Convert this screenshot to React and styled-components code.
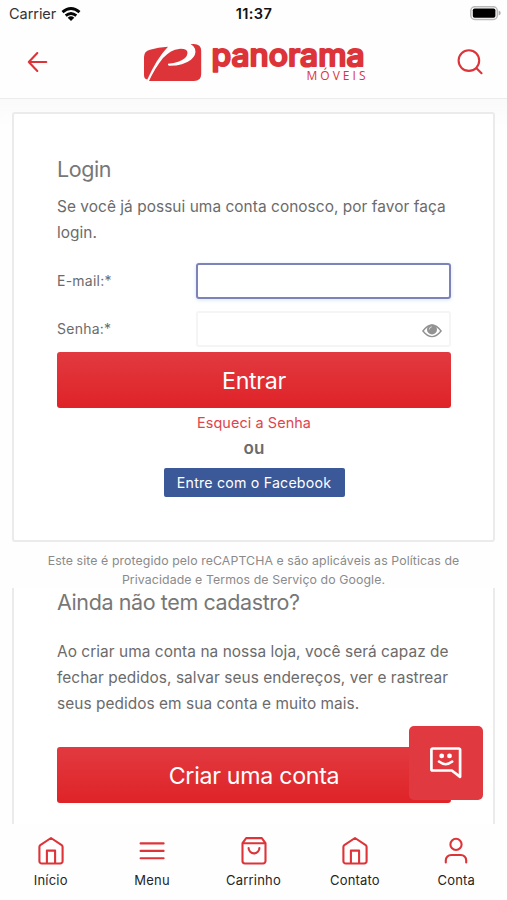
import React from "react";
import styled, { createGlobalStyle } from "styled-components";

const RED = "#dc3439";

const tabs = [
  { label: "Início", icon: "home" },
  { label: "Menu", icon: "menu" },
  { label: "Carrinho", icon: "bag" },
  { label: "Contato", icon: "home" },
  { label: "Conta", icon: "user" },
];

const TabIcon = ({ name }) => (
  <Stroke width="28" height="30" viewBox="0 0 28 30">
    {name === "home" && (
      <path d="M2.4 11a2.2 2.2 0 0 1 .9-1.8L14 2l10.7 7.2a2.2 2.2 0 0 1 .9 1.8v14.2a2.3 2.3 0 0 1-2.3 2.3H4.7a2.3 2.3 0 0 1-2.3-2.3zM9.9 27.5V14.6h8.2v12.9" />
    )}
    {name === "menu" && <path d="M2.6 7.4h23M2.6 14.9h23M2.6 22.3h23" />}
    {name === "bag" && (
      <path d="M2.5 7.2 6.2 2.1h15.6l3.7 5.1v17.9a2.4 2.4 0 0 1-2.4 2.4H4.9a2.4 2.4 0 0 1-2.4-2.4zM2.5 7.2h23M8.6 12a5.4 5.4 0 0 0 10.8 0" />
    )}
    {name === "user" && (
      <>
        <circle cx="14" cy="8.4" r="5.6" />
        <path d="M3.8 26.5v-2.1a5.4 5.4 0 0 1 5.4-5.4h9.6a5.4 5.4 0 0 1 5.4 5.4v2.1" />
      </>
    )}
  </Stroke>
);

const Logo = () => (
  <LogoSvg width="224" height="62" viewBox="0 -12 224 62">
    <path
      fill={RED}
      d="M1 14Q1 8 7 6.7Q15 4.5 25 3.8Q14 15 4.3 36.6Q1 36 1 32z"
    />
    <path
      fill={RED}
      d="M6 38Q12 25 20 15Q28 6.5 36 5.9Q44.5 5.4 44.5 10Q44 15.5 36 18.5Q31 20.3 25 20.8Q24.5 22.3 26 22.8Q40 23 48 16.8Q53.8 11.8 52 5.8Q50.7 2.5 47.5 1.3Q58.2-.3 58.2 8V31Q58.2 38 51 38z"
    />
    <Wordmark
      x="68.5"
      y="22.5"
      textLength="153"
      lengthAdjust="spacingAndGlyphs"
    >
      panorama
    </Wordmark>
    <Tagline x="163.5" y="36.6" textLength="59">
      MÓVEIS
    </Tagline>
  </LogoSvg>
);

const App = () => {
  return (
    <Screen>
      <GlobalStyle />
      <StatusBar>
        <Carrier>
          Carrier
          <svg width="20" height="16" viewBox="0 0 20 16">
            <g fill="none" stroke="#050505" strokeWidth="2.9">
              <path d="M1.5 6.2Q10-1.1 18.5 6.2" />
              <path d="M4.7 9.6Q10 5.3 15.3 9.6" />
            </g>
            <path d="M6.7 11.7Q10 9 13.3 11.7L10 15z" fill="#050505" />
          </svg>
        </Carrier>
        <Clock>11:37</Clock>
        <Battery>
          <svg width="31" height="16" viewBox="0 0 31 16">
            <rect x=".8" y=".8" width="26.5" height="12.6" rx="4" fill="#fff" stroke="#b9b9b9" strokeWidth="1.5" />
            <rect x="2.8" y="2.5" width="22.6" height="9.2" rx="1.8" fill="#000" />
            <path d="M28.7 4.6q2 .8 2 2.5t-2 2.5z" fill="#aaa" />
          </svg>
        </Battery>
      </StatusBar>

      <Header>
        <Stroke width="22" height="22" viewBox="0 0 22 22">
          <path d="M20.3 11H2.8M11.3 2 2.8 11l8.5 9" />
        </Stroke>
        <Logo />
        <Stroke width="28" height="28" viewBox="0 0 28 28">
          <circle cx="12.9" cy="12.6" r="10.3" />
          <path d="m20.5 20.2 5 5" />
        </Stroke>
      </Header>

      <Content>
        <LoginCard>
          <Title>Login</Title>
          <Text>
            Se você já possui uma conta conosco, por favor faça
            <br />
            login.
          </Text>
          <Field>
            <Label>E-mail:*</Label>
            <InputBox $focused />
          </Field>
          <Field>
            <Label>Senha:*</Label>
            <InputBox>
              <svg width="20" height="14" viewBox="0 0 20 14">
                <path d="M.9 7Q10-4.9 19.1 7Q10 18.2.9 7z" fill="#fff" stroke="#929292" strokeWidth="1.4" />
                <circle cx="10" cy="5.5" r="5" fill="#929292" />
                <path d="M7.3 5.5Q7.3 3 9.8 2.8" fill="none" stroke="#ddd" strokeWidth="1" />
              </svg>
            </InputBox>
          </Field>
          <RedButton>Entrar</RedButton>
          <Forgot>Esqueci a Senha</Forgot>
          <Or>ou</Or>
          <FacebookButton>Entre com o Facebook</FacebookButton>
        </LoginCard>

        <Notice>
          Este site é protegido pelo reCAPTCHA e são aplicáveis as Políticas de
          <br />
          Privacidade e Termos de Serviço do Google.
        </Notice>

        <SignupCard>
          <SignupTitle>Ainda não tem cadastro?</SignupTitle>
          <SignupText>
            Ao criar uma conta na nossa loja, você será capaz de
            <br />
            fechar pedidos, salvar seus endereços, ver e rastrear
            <br />
            seus pedidos em sua conta e muito mais.
          </SignupText>
          <RedButton>Criar uma conta</RedButton>
        </SignupCard>
      </Content>

      <ChatButton>
        <svg width="34" height="34" viewBox="0 0 34 34">
          <path
            d="M3.7 2.5h26.1a1.3 1.3 0 0 1 1.3 1.3v27l-8.3-6.3H3.7a1.3 1.3 0 0 1-1.3-1.3V3.8a1.3 1.3 0 0 1 1.3-1.3z"
            fill="none"
            stroke="#fff"
            strokeWidth="2.7"
            strokeLinejoin="round"
          />
          <circle cx="12.7" cy="9.9" r="2.4" fill="#fff" />
          <circle cx="20.5" cy="9.9" r="2.4" fill="#fff" />
          <path d="M10 15.6q6.6 5.2 13.2 0" fill="none" stroke="#fff" strokeWidth="2.5" strokeLinecap="round" />
        </svg>
      </ChatButton>

      <TabBar>
        {tabs.map((tab) => (
          <Tab key={tab.label}>
            <TabIcon name={tab.icon} />
            <span>{tab.label}</span>
          </Tab>
        ))}
      </TabBar>
    </Screen>
  );
};

export default App;

const GlobalStyle = createGlobalStyle`
  * {
    box-sizing: border-box;
  }
  body {
    margin: 0;
    background: #fff;
  }
  button {
    font-family: inherit;
    border: none;
    padding: 0;
  }
`;

const Screen = styled.div`
  position: relative;
  display: flex;
  flex-direction: column;
  width: 507px;
  height: 900px;
  overflow: hidden;
  background: #fefefe;
  color: #6b6b6b;
  font-family: Inter, "Liberation Sans", sans-serif;
`;

const StatusBar = styled.div`
  display: grid;
  grid-template-columns: 1fr auto 1fr;
  align-items: center;
  height: 27px;
  padding: 0 6px 0 9px;
  color: #111;
  font-size: 14.5px;
`;

const Carrier = styled.div`
  display: flex;
  align-items: center;
  gap: 5px;
  letter-spacing: -0.05px;
  color: #333;
`;

const Clock = styled.div`
  margin-right: 2px;
  font-weight: 600;
  font-size: 14.6px;
  letter-spacing: 0.4px;
`;

const Battery = styled.div`
  display: flex;
  justify-content: flex-end;
`;

const Header = styled.header`
  display: flex;
  align-items: center;
  justify-content: space-between;
  height: 72px;
  padding: 0 23px 2px 26px;
  border-bottom: 1px solid #ececec;
`;

const Stroke = styled.svg`
  fill: none;
  stroke: ${RED};
  stroke-width: 2.1;
  stroke-linecap: round;
  stroke-linejoin: round;
`;

const LogoSvg = styled.svg`
  margin-left: 6px;
`;

const Wordmark = styled.text`
  font-family: Inter, sans-serif;
  font-size: 30px;
  font-weight: 500;
  fill: ${RED};
  stroke: ${RED};
  stroke-width: 2;
  stroke-linejoin: round;
`;

const Tagline = styled.text`
  font-family: "Open Sans", sans-serif;
  font-size: 12px;
  fill: ${RED};
`;

const Content = styled.main`
  flex: 1;
  min-height: 0;
  padding: 13px 12px 0 12px;
  background: linear-gradient(#fafafa, #fefefe 28px);
`;

const LoginCard = styled.section`
  display: flex;
  flex-direction: column;
  height: 430px;
  padding: 40px 42px 0 43px;
  border: 2px solid #ebebeb;
  border-radius: 3px;
  background: #fff;
`;

const Title = styled.h2`
  margin: 0;
  height: 30px;
  line-height: 30px;
  font-size: 21.5px;
  font-weight: 400;
  letter-spacing: -0.4px;
  color: #777;
`;

const Text = styled.p`
  margin: 10px 0 17px;
  font-size: 15.4px;
  line-height: 26px;
  letter-spacing: 0.06px;
  white-space: nowrap;
`;

const Field = styled.div`
  display: flex;
  align-items: center;
  flex: none;
  height: 36px;
  margin-bottom: 12px;

  & + & {
    margin-bottom: 5px;
  }
`;

const Label = styled.label`
  width: 139px;
  padding-bottom: 2px;
  font-size: 14px;
  letter-spacing: 0.25px;
`;

const InputBox = styled.div`
  display: flex;
  align-items: center;
  justify-content: flex-end;
  flex: 1;
  height: 36px;
  padding: 4px 7px 0 0;
  border: 2px solid ${(props) => (props.$focused ? "#7d82b8" : "#f5f5f5")};
  border-radius: 3px;
  box-shadow: ${(props) => (props.$focused ? "0 1px 4px #d5e4f6" : "none")};
  background: #fff;
`;

const RedButton = styled.button`
  flex: none;
  width: 100%;
  height: 56px;
  padding-top: 2px;
  border-radius: 3px;
  background: linear-gradient(#e13a40, #df2328);
  color: #fff;
  font-size: 23.2px;
  font-weight: 400;
  letter-spacing: -0.3px;
`;

const Forgot = styled.a`
  margin-top: 5px;
  line-height: 20px;
  text-align: center;
  font-size: 14.4px;
  letter-spacing: 0.1px;
  color: #e0454d;
`;

const Or = styled.strong`
  margin: 2px 0 7px;
  line-height: 26px;
  text-align: center;
  font-size: 17px;
  font-weight: 600;
`;

const FacebookButton = styled.button`
  align-self: center;
  width: 181px;
  height: 29px;
  padding-bottom: 1px;
  border-radius: 2px;
  background: #3b5898;
  color: #fff;
  font-size: 14.2px;
  letter-spacing: 0.2px;
`;

const Notice = styled.p`
  height: 46px;
  margin: 0;
  padding-top: 10px;
  text-align: center;
  font-size: 12.3px;
  line-height: 18.5px;
  letter-spacing: 0.1px;
  color: #8a8a8a;
  white-space: nowrap;
`;

const SignupCard = styled.section`
  height: 236px;
  padding: 0 42px 0 43px;
  border: solid #ebebeb;
  border-width: 0 2px;
  background: #fff;
`;

const SignupTitle = styled(Title)`
  height: 28px;
  line-height: 28px;
`;

const SignupText = styled(Text)`
  margin: 23px 0 30px;
`;

const ChatButton = styled.button`
  position: absolute;
  right: 24px;
  bottom: 100px;
  display: grid;
  place-items: center;
  width: 74px;
  height: 74px;
  border-radius: 5px;
  background: #e03a40;
`;

const TabBar = styled.nav`
  display: flex;
  height: 76px;
  background: #fefefe;
`;

const Tab = styled.div`
  display: flex;
  flex: 1;
  flex-direction: column;
  align-items: center;
  gap: 5px;
  padding-top: 12px;
  color: #252525;
  font-size: 13px;
  line-height: 18px;
  letter-spacing: 0.2px;
`;
